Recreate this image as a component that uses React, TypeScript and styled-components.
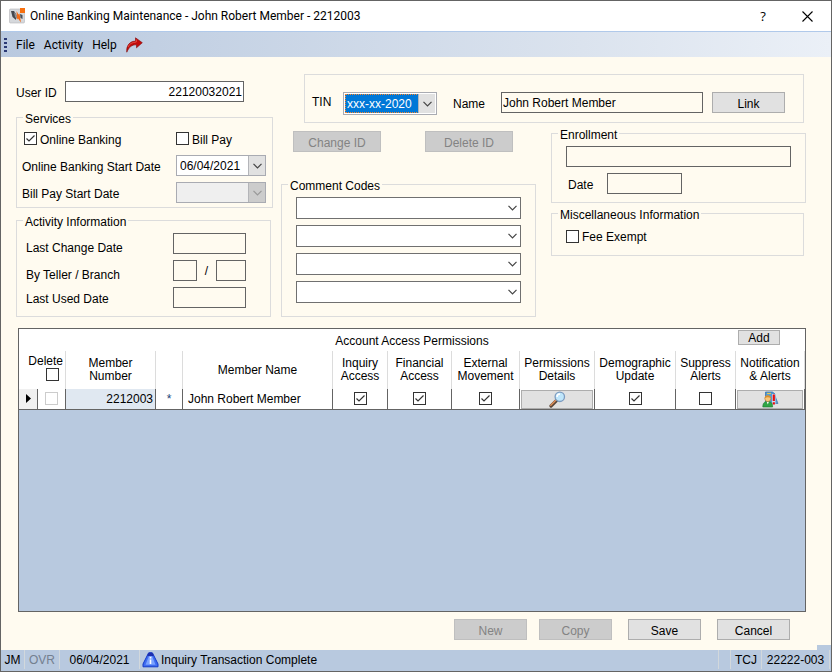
import React from "react";
import styled, { createGlobalStyle, css } from "styled-components";

const c = {
  cream: "#fffbf0",
  blue: "#b8c9df",
  line: "#dcdcdc",
  dark: "#646464",
  face: "#e1e1e1",
  faceBorder: "#adadad",
};

const Global = createGlobalStyle`
  *, *::before, *::after { box-sizing: border-box; }
  body { margin: 0; background: ${c.cream}; }
  body, button, input, select {
    font-family: "Liberation Sans", Arial, sans-serif;
    font-size: 12px;
    line-height: 14px;
    color: #000;
  }
`;

const Window = styled.div`
  display: flex;
  flex-direction: column;
  min-height: 100vh;
  border: 1px solid ${c.dark};
  background: ${c.cream};
`;

const TitleBar = styled.header`
  display: flex;
  align-items: center;
  height: 30px;
  padding: 0 15px 0 8px;
  gap: 4px;
  background: #fff;
`;

const Title = styled.h1`
  flex: 1;
  margin: 0;
  font-family: Roboto, sans-serif;
  font-size: 12px;
  line-height: 16px;
  font-weight: 400;
`;

const GlyphButton = styled.button`
  display: flex;
  align-items: center;
  justify-content: center;
  width: 18px;
  height: 18px;
  margin-left: 22px;
  padding: 0;
  border: 0;
  background: none;
  font-family: "Open Sans", sans-serif;
  font-size: 13px;
`;

const MenuBar = styled.nav`
  display: flex;
  align-items: center;
  height: 26px;
  gap: 9px;
  padding: 0 3px;
  border-top: 1px solid #b0c9ea;
  background: linear-gradient(90deg, #b9c9df, #dbe3ee 70%, #ebf0f7);
`;

const Grip = styled.span`
  width: 3px;
  height: 14px;
  background: repeating-linear-gradient(#2b3a75 0 2px, transparent 2px 4px);
`;

const MenuItem = styled.button`
  padding: 0;
  border: 0;
  background: none;
  font-family: Roboto, sans-serif;
  line-height: 16px;
`;

const IconButton = styled(MenuItem)`
  display: flex;
`;

const Body = styled.main`
  flex: 1;
  display: flex;
  flex-direction: column;
  padding: 17px 25px 10px 15px;
`;

const Top = styled.div`
  display: grid;
  grid-template-columns: minmax(0, 257fr) minmax(0, 525fr);
  column-gap: 8px;
`;

const LeftColumn = styled.div`
  display: flex;
  flex-direction: column;
  padding-top: 7px;
`;

const RightArea = styled.div`
  display: flex;
  flex-direction: column;
`;

const Columns = styled.div`
  display: grid;
  grid-template-columns: minmax(0, 1fr) minmax(0, 1fr);
  column-gap: 15px;
  margin-top: 1px;
`;

const Column = styled.div`
  display: flex;
  flex-direction: column;
`;

const ButtonPair = styled.div`
  display: flex;
  gap: 44px;
  padding: 7px 12px 23px;
`;

const Group = styled.fieldset`
  min-width: 0;
  margin: 0;
  padding: 0;
  border: 1px solid ${c.line};
`;

const ActivityGroup = styled(Group)`
  margin: 3px 2px 0 0;
`;

const MiscGroup = styled(Group)`
  margin: 1px 2px 0 0;
`;

const Legend = styled.legend`
  margin-left: 6px;
  padding: 4px 2px 0;
  line-height: 14px;
`;

const Stack = styled.div<{ $pad: string }>`
  display: flex;
  flex-direction: column;
  gap: 6px;
  padding: ${(p) => p.$pad};
`;

const Row = styled.div`
  display: flex;
  height: 21px;
`;

const UserRow = styled(Row)`
  margin-bottom: 6px;
`;

const IndentedRow = styled(Row)`
  padding-left: 2px;
`;

const SplitRow = styled(Row)<{ $fixed: number }>`
  display: grid;
  grid-template-columns: minmax(0, 1fr) ${(p) => p.$fixed}px;
`;

const CheckRow = styled(SplitRow)`
  padding-left: 2px;
`;

const Label = styled.label<{ $drop?: number; $w?: number }>`
  ${(p) => p.$w && css`width: ${p.$w}px;`}
  flex: none;
  padding-top: ${(p) => p.$drop ?? 5}px;
  line-height: 14px;
  white-space: nowrap;
`;

const TextBox = styled.input<{ $w?: number; $right?: boolean; $white?: boolean }>`
  ${(p) => (p.$w ? css`width: ${p.$w}px; flex: none;` : css`flex: 1; min-width: 0;`)}
  height: 21px;
  padding: 0 1px;
  border: 1px solid ${c.dark};
  border-radius: 0;
  background: ${(p) => (p.$white ? "#fff" : c.cream)};
  text-align: ${(p) => (p.$right ? "right" : "left")};
  outline: 0;
`;

const Slash = styled.span`
  flex: 1;
  padding-top: 4px;
  text-align: center;
`;

const PushButton = styled.button<{ $w: number; $h?: number }>`
  flex: none;
  width: ${(p) => p.$w}px;
  height: ${(p) => p.$h ?? 21}px;
  padding: ${(p) => (p.$h ? 0 : 2)}px 0 0;
  border: 1px solid ${c.faceBorder};
  background: ${c.face};
  line-height: 14px;
  &:disabled {
    border-color: #bfbfbf;
    background: #ccc;
    color: #838383;
  }
`;

const CheckLabel = styled.label`
  display: inline-flex;
  align-items: center;
  gap: 3px;
  white-space: nowrap;
  span { padding-top: 2px; }
`;

const Box = styled.span`
  display: inline-grid;
  flex: none;
  vertical-align: top;
  input, svg { grid-area: 1 / 1; }
  svg { pointer-events: none; visibility: hidden; }
  input:checked + svg { visibility: visible; }
  && { padding: 0; }
`;

const CheckInput = styled.input`
  appearance: none;
  width: 13px;
  height: 13px;
  margin: 0;
  border: 1px solid #333;
  background: #fff;
  &:disabled { border-color: #ccc; }
`;

function Check(props: React.InputHTMLAttributes<HTMLInputElement>) {
  return (
    <Box>
      <CheckInput type="checkbox" {...props} />
      <svg width="13" height="13" viewBox="0 0 13 13" fill="none" stroke="#333" strokeWidth="1.2">
        <path d="M2.5 6.5 5 9l5.5-5.5" />
      </svg>
    </Box>
  );
}

const Combo = styled.div<{ $kind: "plain" | "date" | "focus" }>`
  display: grid;
  flex: none;
  height: ${(p) => ({ plain: 22, date: 21, focus: 23 })[p.$kind]}px;
  ${(p) => p.$kind === "focus" && css`width: 94px; margin-right: 16px; padding: 1px; background: #fff;`}
  border: 1px solid ${(p) => (p.$kind === "plain" ? "#707070" : "#a9abb2")};
  select, span { grid-area: 1 / 1; min-width: 0; }
`;

const ComboSelect = styled.select<{ $focus?: boolean }>`
  appearance: none;
  width: 100%;
  height: 100%;
  margin: 0;
  padding: 0 18px 0 3px;
  border: 0;
  border-radius: 0;
  background: #fff;
  outline: 0;
  &:disabled { background: #efefef; opacity: 1; }
  ${(p) => p.$focus && css`
    padding: 0 17px 0 1px;
    border: 1px dotted #ff8728;
    background: #0078d7;
    color: #fff;
  `}
`;

const Drop = styled.span<{ $face?: string }>`
  display: flex;
  align-items: center;
  justify-content: center;
  justify-self: end;
  width: 17px;
  background: ${(p) => p.$face ?? "transparent"};
  border-left: 1px solid ${(p) => (p.$face ? "#b4b5b9" : "transparent")};
  color: #444;
  pointer-events: none;
  ${(p) => p.$face === "#ccc" && css`color: #999;`}
`;

const Chevron = () => (
  <svg width="9" height="6" viewBox="0 0 9 6" fill="none" stroke="currentColor" strokeWidth="1.2">
    <path d="M.5.8 4.5 4.8 8.5.8" />
  </svg>
);

const TinPanel = styled.section`
  display: flex;
  align-items: flex-start;
  height: 49px;
  margin: 0 2px 0 23px;
  padding: 17px 18px 0 7px;
  border: 1px solid ${c.line};
`;

const LinkSlot = styled.div`
  display: flex;
  margin-left: 9px;
`;

const Panel = styled.section`
  flex: 1;
  min-height: 160px;
  margin: 11px 0 7px 2px;
  border: 1px solid ${c.dark};
  background: ${c.blue};
`;

const Caption = styled.div`
  display: grid;
  grid-template-columns: 1fr auto 1fr;
  height: 22px;
  padding: 1px 25px 0;
  background: #fff;
  h2 {
    margin: 0;
    padding-top: 4px;
    font-size: 12px;
    font-weight: 400;
  }
  button { grid-column: 3; justify-self: end; }
`;

const Table = styled.table`
  width: 100%;
  table-layout: fixed;
  border-collapse: separate;
  border-spacing: 0;
  background: #fff;
`;

const Th = styled.th`
  height: 38px;
  padding: 0;
  border-right: 1px solid ${c.line};
  font-weight: 400;
  line-height: 13px;
  white-space: nowrap;
`;

const DeleteHead = styled.div`
  display: flex;
  flex-direction: column;
  align-items: flex-end;
  padding: 0 2px 5px 0;
  label { line-height: 14px; }
  ${Box} { margin-right: 4px; }
`;

const Td = styled.td<{ $align?: string; $bg?: string }>`
  height: 21px;
  padding: 0 2px 0 ${(p) => (p.$align === "left" ? 5 : 2)}px;
  border-right: 1px solid ${c.dark};
  border-bottom: 1px solid ${c.dark};
  background: ${(p) => p.$bg ?? "#fff"};
  text-align: ${(p) => p.$align ?? "center"};
  line-height: 14px;
  white-space: nowrap;
`;

const StarTd = styled(Td)`
  color: #1b3f7a;
`;

const ButtonTd = styled(Td)`
  padding: 0 1px;
`;

const CellButton = styled.button`
  display: flex;
  align-items: center;
  justify-content: center;
  width: 100%;
  height: 19px;
  padding: 0;
  border: 1px solid ${c.faceBorder};
  background: ${c.face};
`;

const Actions = styled.div`
  display: flex;
  justify-content: flex-end;
  gap: 16px;
  padding-right: 16px;
`;

const ActionPair = styled.div`
  display: flex;
  gap: 12px;
`;

const StatusBar = styled.footer`
  position: relative;
  display: flex;
  height: 21px;
  padding: 0 1px 2px 0;
  background: ${c.blue};
  &::before {
    content: "";
    position: absolute;
    right: 0;
    bottom: 100%;
    width: 14px;
    height: 5px;
    background: ${c.blue};
  }
`;

const Cell = styled.span<{ $w?: number; $muted?: boolean }>`
  display: flex;
  align-items: center;
  justify-content: center;
  ${(p) => (p.$w ? css`width: ${p.$w}px;` : css`flex: 1; justify-content: flex-start; padding-left: 2px;`)}
  gap: 2px;
  border-right: 1px solid #d2d8dc;
  white-space: nowrap;
  ${(p) => p.$muted && css`color: #74808f;`}
`;

const AppIcon = () => (
  <svg width="17" height="16" viewBox="0 0 17 16">
    <rect x=".5" y="1" width="15" height="14" rx="1" fill="#d5d8dc" stroke="#b5b5b8" strokeWidth=".6" />
    <path d="M2 3h3l2 3v6L3.500 9z" fill="#45484e" />
    <path d="M5 4l3 3v4L6 9z" fill="#8c9096" />
    <path d="M7.500 3l2 3.500 1-1 1.500 9-3-4-1 1z" fill="#f36b17" />
    <path d="M11 6l2.500 1v4l-2-1z" fill="#4c5058" />
    <path d="M11 0h5v5h-5z" fill="#f7700f" />
  </svg>
);

const ArrowIcon = () => (
  <svg width="17" height="16" viewBox="0 0 17 16">
    <path d="M.8 15.200C0 8.500 4 4.200 9.500 4.100V.8L16.300 5.700 10.500 10.800V7.800C6 7.600 3 10 .8 15.200z" fill="#c40b0b" stroke="#7e0808" strokeWidth=".6" />
    <path d="M2 10C3.500 6.800 6 5.300 10.300 5V2.700" fill="none" stroke="#ec5a50" strokeWidth=".8" />
  </svg>
);

const LensIcon = () => (
  <svg width="17" height="17" viewBox="0 0 17 17">
    <path d="M7.500 9.500 2 15" stroke="#5b4638" strokeWidth="3.200" strokeLinecap="round" />
    <path d="M7 9 1.800 14.200" stroke="#e2915a" strokeWidth="1.400" strokeLinecap="round" />
    <circle cx="10.800" cy="5.800" r="4.700" fill="#bfe6fb" stroke="#7c9cc0" strokeWidth="1.300" />
    <path d="M8 6a3 3 0 0 1 3-3" fill="none" stroke="#fff" strokeWidth="1.500" />
  </svg>
);

const AlertsIcon = () => (
  <svg width="17" height="17" viewBox="0 0 17 17">
    <path d="M3.500 1h7l2.500 2V13H3.500z" fill="#4f9ad6" stroke="#2f6bab" strokeWidth=".7" />
    <path d="M5 2.500h4" stroke="#e6c84a" strokeWidth="1.200" />
    <path d="M12.500 3.500l3.500 9h-4z" fill="#5d96d0" stroke="#2f6bab" strokeWidth=".6" />
    <path d="M10 3h3.500v11H10z" fill="#c9dcf0" />
    <path d="M11.800 3.500v6.500M11.800 11.300v2.200" stroke="#e80f0f" strokeWidth="2.200" />
    <path d="M.8 16c0-4.200 1.700-5.500 4.900-5.500s4.900 1.300 4.900 5.500z" fill="#2fa544" stroke="#1d7a2f" strokeWidth=".6" />
    <path d="M4.700 10.700h2.200L5.800 13.500z" fill="#fff" />
    <circle cx="5.800" cy="7.600" r="3" fill="#f8c67a" stroke="#b9772c" strokeWidth=".6" />
    <path d="M2.700 7.200C2.800 3.600 8.800 3.600 8.900 7.200 7 6 4.700 6 2.700 7.200z" fill="#d9902b" />
  </svg>
);

const InfoIcon = () => (
  <svg width="17" height="16" viewBox="0 0 17 16">
    <path d="M6.500 1 8.500.5l2 .5L16 12v2.800H1V12z" fill="#3f6cf0" stroke="#1239c8" strokeWidth="1" strokeLinejoin="round" />
    <path d="M7.200 3.500h2.600L13.500 12.800h-10z" fill="#7ba3ff" />
    <path d="M6.500.8h4l1.200 3.200H5.300z" fill="#1c2fae" />
    <path d="M8.500 5v1.500M8.500 7.500v4.500" stroke="#fff" strokeWidth="1.600" />
  </svg>
);

const Pointer = () => (
  <svg width="5" height="9" viewBox="0 0 5 9">
    <path d="M0 0 5 4.500 0 9z" />
  </svg>
);

const widths: (number | undefined)[] = [19, 28, 90, 27, undefined, 55, 64, 68, 75, 81, 60, 69];

const heads: string[][] = [
  ["Member", "Number"],
  [],
  ["Member Name"],
  ["Inquiry", "Access"],
  ["Financial", "Access"],
  ["External", "Movement"],
  ["Permissions", "Details"],
  ["Demographic", "Update"],
  ["Suppress", "Alerts"],
  ["Notification", "& Alerts"],
];

export default function App() {
  return (
    <>
      <Global />
      <Window>
        <TitleBar>
          <AppIcon />
          <Title>Online Banking Maintenance - John Robert Member - 2212003</Title>
          <GlyphButton type="button">?</GlyphButton>
          <GlyphButton type="button" aria-label="Close">
            <svg width="11" height="11" viewBox="0 0 11 11" stroke="#000" strokeWidth="1.100">
              <path d="M.5.5l10 10M10.500.5l-10 10" />
            </svg>
          </GlyphButton>
        </TitleBar>
        <MenuBar>
          <Grip />
          <MenuItem type="button">File</MenuItem>
          <MenuItem type="button">Activity</MenuItem>
          <MenuItem type="button">Help</MenuItem>
          <IconButton type="button" aria-label="Go">
            <ArrowIcon />
          </IconButton>
        </MenuBar>

        <Body>
          <Top>
            <LeftColumn>
              <UserRow>
                <Label htmlFor="user" $w={49}>User ID</Label>
                <TextBox id="user" $w={179} $right $white defaultValue="22120032021" />
              </UserRow>
              <Group>
                <Legend>Services</Legend>
                <Stack $pad="2px 6px 4px 5px">
                  <CheckRow $fixed={90}>
                    <CheckLabel>
                      <Check defaultChecked />
                      <span>Online Banking</span>
                    </CheckLabel>
                    <CheckLabel>
                      <Check />
                      <span>Bill Pay</span>
                    </CheckLabel>
                  </CheckRow>
                  <SplitRow $fixed={90}>
                    <Label htmlFor="obStart">Online Banking Start Date</Label>
                    <Combo $kind="date">
                      <ComboSelect id="obStart">
                        <option>06/04/2021</option>
                      </ComboSelect>
                      <Drop $face={c.face}><Chevron /></Drop>
                    </Combo>
                  </SplitRow>
                  <SplitRow $fixed={90}>
                    <Label htmlFor="bpStart">Bill Pay Start Date</Label>
                    <Combo $kind="date">
                      <ComboSelect id="bpStart" disabled />
                      <Drop $face="#ccc"><Chevron /></Drop>
                    </Combo>
                  </SplitRow>
                </Stack>
              </Group>
              <ActivityGroup>
                <Legend>Activity Information</Legend>
                <Stack $pad="4px 24px 8px 9px">
                  <SplitRow $fixed={73}>
                    <Label htmlFor="changed" $drop={8}>Last Change Date</Label>
                    <TextBox id="changed" readOnly />
                  </SplitRow>
                  <SplitRow $fixed={73}>
                    <Label htmlFor="teller" $drop={8}>By Teller / Branch</Label>
                    <Row>
                      <TextBox id="teller" $w={24} readOnly />
                      <Slash>/</Slash>
                      <TextBox aria-label="Branch" $w={30} readOnly />
                    </Row>
                  </SplitRow>
                  <SplitRow $fixed={73}>
                    <Label htmlFor="used">Last Used Date</Label>
                    <TextBox id="used" readOnly />
                  </SplitRow>
                </Stack>
              </ActivityGroup>
            </LeftColumn>

            <RightArea>
              <TinPanel>
                <Label htmlFor="tin" $w={31} $drop={3}>TIN</Label>
                <Combo $kind="focus">
                  <ComboSelect id="tin" $focus>
                    <option>xxx-xx-2020</option>
                  </ComboSelect>
                  <Drop $face={c.face}><Chevron /></Drop>
                </Combo>
                <Label htmlFor="name" $w={48}>Name</Label>
                <TextBox id="name" defaultValue="John Robert Member" />
                <LinkSlot>
                  <PushButton type="button" $w={73}>Link</PushButton>
                </LinkSlot>
              </TinPanel>

              <Columns>
                <Column>
                  <ButtonPair>
                    <PushButton type="button" $w={88} disabled>Change ID</PushButton>
                    <PushButton type="button" $w={88} disabled>Delete ID</PushButton>
                  </ButtonPair>
                  <Group>
                    <Legend>Comment Codes</Legend>
                    <Stack $pad="4px 14px 13px">
                      {[1, 2, 3, 4].map((n) => (
                        <Combo key={n} $kind="plain">
                          <ComboSelect aria-label={`Comment code ${n}`} />
                          <Drop><Chevron /></Drop>
                        </Combo>
                      ))}
                    </Stack>
                  </Group>
                </Column>
                <Column>
                  <Group>
                    <Legend>Enrollment</Legend>
                    <Stack $pad="4px 14px 8px">
                      <Row>
                        <TextBox aria-label="Enrollment" readOnly />
                      </Row>
                      <IndentedRow>
                        <Label htmlFor="enrolled" $w={39}>Date</Label>
                        <TextBox id="enrolled" $w={75} readOnly />
                      </IndentedRow>
                    </Stack>
                  </Group>
                  <MiscGroup>
                    <Legend>Miscellaneous Information</Legend>
                    <Stack $pad="6px 14px 11px">
                      <CheckLabel>
                        <Check />
                        <span>Fee Exempt</span>
                      </CheckLabel>
                    </Stack>
                  </MiscGroup>
                </Column>
              </Columns>
            </RightArea>
          </Top>

          <Panel>
            <Caption>
              <span />
              <h2>Account Access Permissions</h2>
              <PushButton type="button" $w={42} $h={15}>Add</PushButton>
            </Caption>
            <Table>
              <colgroup>
                {widths.map((w, i) => (
                  <col key={i} width={w} />
                ))}
              </colgroup>
              <thead>
                <tr>
                  <Th colSpan={2}>
                    <DeleteHead>
                      <label htmlFor="deleteAll">Delete</label>
                      <Check id="deleteAll" />
                    </DeleteHead>
                  </Th>
                  {heads.map((lines, i) => (
                    <Th key={i}>
                      {lines.map((l) => (
                        <div key={l}>{l}</div>
                      ))}
                    </Th>
                  ))}
                </tr>
              </thead>
              <tbody>
                <tr>
                  <Td $bg="#f0f0f0"><Pointer /></Td>
                  <Td><Check disabled aria-label="Delete member" /></Td>
                  <Td $align="right" $bg="#e0e8f1">2212003</Td>
                  <StarTd>*</StarTd>
                  <Td $align="left">John Robert Member</Td>
                  <Td><Check defaultChecked aria-label="Inquiry access" /></Td>
                  <Td><Check defaultChecked aria-label="Financial access" /></Td>
                  <Td><Check defaultChecked aria-label="External movement" /></Td>
                  <ButtonTd>
                    <CellButton type="button" aria-label="Permissions details"><LensIcon /></CellButton>
                  </ButtonTd>
                  <Td><Check defaultChecked aria-label="Demographic update" /></Td>
                  <Td><Check aria-label="Suppress alerts" /></Td>
                  <ButtonTd>
                    <CellButton type="button" aria-label="Notification and alerts"><AlertsIcon /></CellButton>
                  </ButtonTd>
                </tr>
              </tbody>
            </Table>
          </Panel>

          <Actions>
            <ActionPair>
              <PushButton type="button" $w={73} disabled>New</PushButton>
              <PushButton type="button" $w={73} disabled>Copy</PushButton>
            </ActionPair>
            <PushButton type="button" $w={73}>Save</PushButton>
            <PushButton type="button" $w={73}>Cancel</PushButton>
          </Actions>
        </Body>

        <StatusBar>
          <Cell $w={24}>JM</Cell>
          <Cell $w={35} $muted>OVR</Cell>
          <Cell $w={80}>06/04/2021</Cell>
          <Cell>
            <InfoIcon />
            Inquiry Transaction Complete
          </Cell>
          <Cell $w={12} />
          <Cell $w={31}>TCJ</Cell>
          <Cell $w={68}>22222-003</Cell>
        </StatusBar>
      </Window>
    </>
  );
}
